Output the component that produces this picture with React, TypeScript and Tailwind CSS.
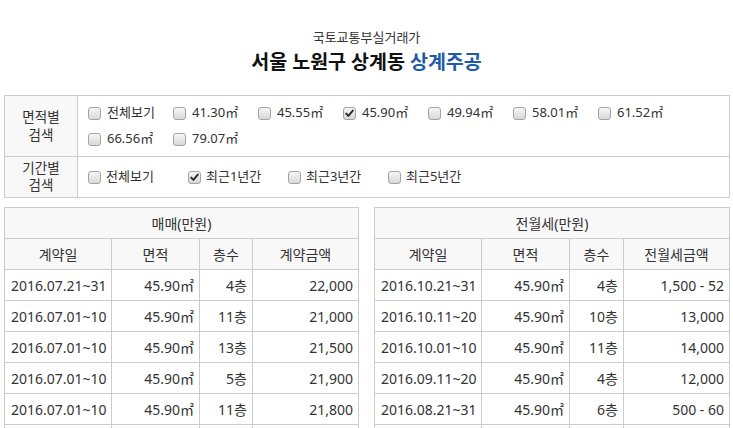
import React from "react";

const FONT = { fontFamily: '"Noto Sans", "Noto Sans CJK KR", sans-serif' };

function Box({ checked }: { checked?: boolean }) {
  return (
    <span className="relative inline-flex h-[13px] w-[13px] shrink-0 items-center justify-center rounded-[3px] border border-[#a3a3a3] bg-gradient-to-b from-[#f6f6f6] to-[#d8d8d8]">
      {checked && (
        <svg width="11" height="11" viewBox="0 0 11 11" className="absolute">
          <path d="M2.2 5.6 L4.4 7.9 L8.8 2.6" fill="none" stroke="#2a2a2a" strokeWidth="1.9" strokeLinecap="round" strokeLinejoin="round" />
        </svg>
      )}
    </span>
  );
}

const areas = ["전체보기", "41.30㎡", "45.55㎡", "45.90㎡", "49.94㎡", "58.01㎡", "61.52㎡", "66.56㎡", "79.07㎡"];
const periods = ["전체보기", "최근1년간", "최근3년간", "최근5년간"];

const sales = [
  ["2016.07.21~31", "45.90㎡", "4층", "22,000"],
  ["2016.07.01~10", "45.90㎡", "11층", "21,000"],
  ["2016.07.01~10", "45.90㎡", "13층", "21,500"],
  ["2016.07.01~10", "45.90㎡", "5층", "21,900"],
  ["2016.07.01~10", "45.90㎡", "11층", "21,800"],
  ["", "", "", ""],
];

const rents = [
  ["2016.10.21~31", "45.90㎡", "4층", "1,500 - 52"],
  ["2016.10.11~20", "45.90㎡", "10층", "13,000"],
  ["2016.10.01~10", "45.90㎡", "11층", "14,000"],
  ["2016.09.11~20", "45.90㎡", "4층", "12,000"],
  ["2016.08.21~31", "45.90㎡", "6층", "500 - 60"],
  ["", "", "", ""],
];

function Table({
  title,
  heads,
  rows,
  cols,
}: {
  title: string;
  heads: string[];
  rows: string[][];
  cols: string;
}) {
  const cell = "h-[31px] border-r border-b border-[#cccccc] flex items-center text-[14px] text-[#333]";
  return (
    <div className={`grid ${cols} border-l border-t border-[#cccccc]`}>
      <div className={`${cell} col-span-4 justify-center bg-[#f8f8f8]`}>{title}</div>
      {heads.map((h, i) => (
        <div key={i} className={`${cell} justify-center bg-[#f8f8f8]`}>
          {h}
        </div>
      ))}
      {rows.map((r, ri) =>
        r.map((v, ci) => (
          <div
            key={`${ri}-${ci}`}
            className={`${cell} ${ci === 0 ? "justify-start pl-[6px]" : "justify-end pr-[5px]"} bg-white`}
          >
            {v}
          </div>
        ))
      )}
    </div>
  );
}

export default function App() {
  return (
    <div className="h-[428px] w-[733px] overflow-hidden bg-white" style={FONT}>
      <div className="flex h-[95px] flex-col items-center pt-[28px]">
        <div className="text-[13px] leading-[18px] text-[#333]">국토교통부실거래가</div>
        <div className="mt-[3px] text-[19.5px] font-bold leading-[26px] text-[#111]">
          서울 노원구 상계동 <span className="text-[#1f5ba6]">상계주공</span>
        </div>
      </div>

      <div className="ml-[4px] w-[726px] border border-[#cccccc]">
        <div className="flex h-[61px] border-b border-[#cccccc]">
          <div className="flex w-[73px] shrink-0 flex-col items-center justify-center border-r border-[#cccccc] bg-[#f8f8f8] text-[13.5px] leading-[18px] text-[#333]">
            <div className="leading-[18px]">면적별</div>
            <div className="leading-[18px]">검색</div>
          </div>
          <div className="flex flex-1 flex-wrap content-center gap-y-[6px] pl-[10px]">
            {areas.map((a, i) => (
              <label key={i} className="flex h-[20px] w-[85px] items-center gap-[6px] text-[13px] text-[#333]">
                <Box checked={i === 3} />
                <span>{a}</span>
              </label>
            ))}
          </div>
        </div>
        <div className="flex h-[40px]">
          <div className="flex w-[73px] shrink-0 flex-col items-center justify-center border-r border-[#cccccc] bg-[#f8f8f8] text-[13.5px] leading-[17px] text-[#333]">
            <div className="leading-[17px]">기간별</div>
            <div className="leading-[17px]">검색</div>
          </div>
          <div className="flex flex-1 items-center pl-[10px]">
            {periods.map((p, i) => (
              <label key={i} className="flex h-[20px] w-[100px] items-center gap-[5px] text-[13px] text-[#333]">
                <Box checked={i === 1} />
                <span>{p}</span>
              </label>
            ))}
          </div>
        </div>
      </div>

      <div className="ml-[4px] mt-[9px] flex w-[726px] gap-[15px]">
        <Table
          title="매매(만원)"
          heads={["계약일", "면적", "층수", "계약금액"]}
          rows={sales}
          cols="grid-cols-[107px_88px_53px_106px]"
        />
        <Table
          title="전월세(만원)"
          heads={["계약일", "면적", "층수", "전월세금액"]}
          rows={rents}
          cols="grid-cols-[107px_88px_54px_106px]"
        />
      </div>
    </div>
  );
}
